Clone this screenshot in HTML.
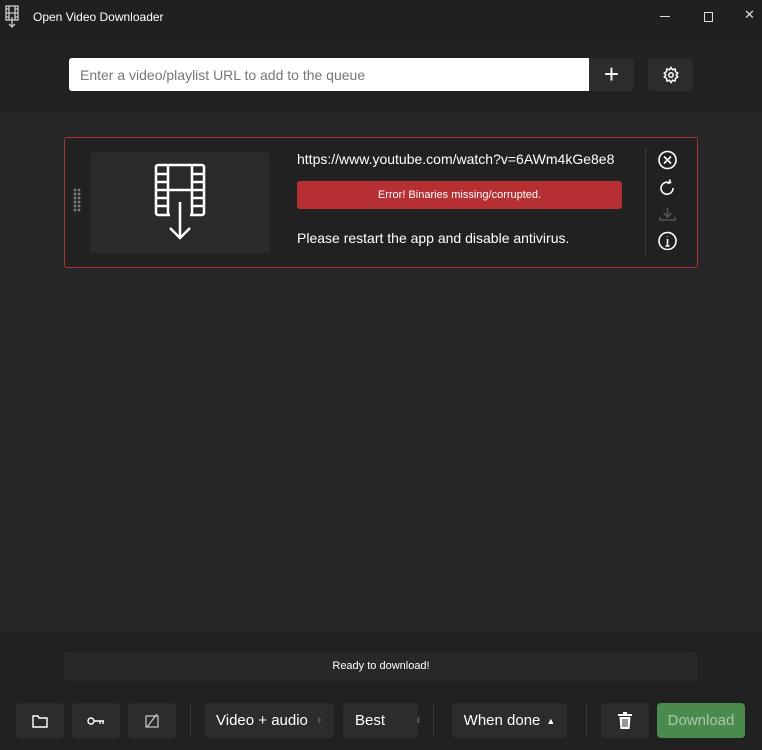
<!DOCTYPE html>
<html><head><style>
*{box-sizing:border-box;margin:0;padding:0}
body{width:762px;height:750px;background:#272727;font-family:"Liberation Sans",sans-serif;color:#fff;position:relative;overflow:hidden}
.abs{position:absolute}
.btn{position:absolute;background:#2c2c2c;border-radius:4px;display:flex;align-items:center;justify-content:center;font-size:15px}
</style></head><body>
<div class="abs" style="left:0;top:0;width:762px;height:36px;background:#202020"></div>
<svg class="abs" style="left:4px;top:5px" width="16" height="24" viewBox="0 0 16 24" fill="none" stroke="#ccc" stroke-width="1.3"><rect x="2" y="1" width="12" height="14"/><path d="M5 1v14M11 1v14M5 8h6M2 4h3M2 8h3M2 12h3M11 4h3M11 8h3M11 12h3M8 12v10M5 19l3 3 3-3"/></svg>
<div class="abs" style="left:33px;top:10px;font-size:12px;color:#fff">Open Video Downloader</div>
<div class="abs" style="left:660px;top:16px;width:10px;height:1px;background:#ddd"></div>
<div class="abs" style="left:704px;top:12px;width:9px;height:10px;border:1px solid #ddd"></div>
<div class="abs" style="left:744px;top:7px;font-size:13px;color:#ddd">✕</div>
<div class="abs" style="left:0;top:36px;width:762px;height:77px;background:#212121"></div>
<div class="abs" style="left:69px;top:58px;width:520px;height:33px;background:#fff;border-radius:3px 0 0 3px;color:#777;font-size:14px;padding:9px 11px">Enter a video/playlist URL to add to the queue</div>
<div class="btn" style="left:589px;top:58px;width:45px;height:33px;border-radius:0 3px 3px 0;font-size:26px;font-weight:300">+</div>
<div class="btn" style="left:648px;top:58px;width:45px;height:33px">
<svg width="18" height="18" viewBox="0 0 24 24" fill="none" stroke="#fff" stroke-width="2"><circle cx="12" cy="12" r="3"/><path d="M12 2l2 3 3.5-1 .5 3.5 3 2-2 2.5 2 2.5-3 2-.5 3.5-3.5-1-2 3-2-3-3.5 1-.5-3.5-3-2 2-2.5-2-2.5 3-2 .5-3.5 3.5 1z"/></svg></div>
<div class="abs" style="left:64px;top:137px;width:634px;height:131px;background:#212121;border:1px solid #a83236;border-radius:3px"></div>
<div class="abs" style="left:73px;top:188px;width:8px;height:24px;background:radial-gradient(circle,#777 1.3px,transparent 1.6px) 0 0/4px 4px"></div>
<div class="abs" style="left:90px;top:152px;width:180px;height:101px;background:#2a2a2a;border-radius:3px"></div>
<svg class="abs" style="left:150px;top:162px" width="60" height="80" viewBox="0 0 60 80" fill="none" stroke="#fff" stroke-width="2.5"><rect x="6" y="3" width="48" height="50" rx="2"/><path d="M18 3v50M42 3v50M18 28h24M6 12h12M6 20h12M6 28h12M6 36h12M6 44h12M42 12h12M42 20h12M42 28h12M42 36h12M42 44h12"/><rect x="20" y="45" width="20" height="12" fill="#2a2a2a" stroke="none"/><path d="M30 40v36M20 66l10 10 10-10"/></svg>
<div class="abs" style="left:297px;top:151px;width:325px;overflow:hidden;white-space:nowrap;font-size:14px">https://www.youtube.com/watch?v=6AWm4kGe8e8</div>
<div class="abs" style="left:297px;top:181px;width:325px;height:28px;background:#b52f33;border-radius:3px;font-size:11px;text-align:center;line-height:28px">Error! Binaries missing/corrupted.</div>
<div class="abs" style="left:297px;top:230px;font-size:14px">Please restart the app and disable antivirus.</div>
<div class="abs" style="left:645px;top:148px;width:1px;height:108px;background:#3a3a3a"></div>
<svg class="abs" style="left:657px;top:150px" width="21" height="100" viewBox="0 0 21 100" fill="none" stroke="#fff" stroke-width="1.6"><circle cx="10.5" cy="10" r="8.5"/><path d="M7 6.5l7 7M14 6.5l-7 7"/><path d="M16 38a6 6 0 1 1-3-5M12.5 29.5l1 3-3 1"/><path d="M10.5 58v9M6.5 63l4 4 4-4M3 67v3h15v-3" stroke="#555"/><circle cx="10.5" cy="91" r="8.5"/><path d="M10.5 89v7M10.5 86v.5M8.5 96h4"/></svg>
<div class="abs" style="left:0;top:631px;width:762px;height:119px;background:#212121"></div>
<div class="abs" style="left:64px;top:652px;width:634px;height:29px;background:#282828;border-radius:3px;font-size:11px;text-align:center;line-height:29px">Ready to download!</div>
<div class="btn" style="left:16px;top:703px;width:48px;height:35px"><svg width="16" height="14" viewBox="0 0 16 14" fill="none" stroke="#fff" stroke-width="1.4"><path d="M1 2h5l1 2h8v9H1z"/></svg></div>
<div class="btn" style="left:72px;top:703px;width:48px;height:35px"><svg width="18" height="10" viewBox="0 0 18 10" fill="none" stroke="#fff" stroke-width="1.4"><circle cx="4" cy="5" r="3"/><path d="M7 5h10M13 5v3M16 5v3"/></svg></div>
<div class="btn" style="left:128px;top:703px;width:48px;height:35px"><svg width="14" height="14" viewBox="0 0 14 14" fill="none" stroke="#ccc" stroke-width="1.2"><rect x="1" y="2" width="12" height="11"/><path d="M2 13L12 0"/></svg></div>
<div class="abs" style="left:190px;top:704px;width:1px;height:33px;background:#3a3a3a"></div>
<div class="btn" style="left:205px;top:703px;width:129px;height:35px;justify-content:flex-start;padding-left:11px">Video + audio<span style="color:#555;font-size:8px;margin-left:8px">⬍</span></div>
<div class="btn" style="left:343px;top:703px;width:75px;height:35px;justify-content:flex-start;padding-left:12px">Best<span style="color:#555;font-size:8px;margin-left:30px">⬍</span></div>
<div class="abs" style="left:433px;top:704px;width:1px;height:33px;background:#3a3a3a"></div>
<div class="btn" style="left:452px;top:703px;width:115px;height:35px">When done <span style="font-size:9px;margin-left:6px">▲</span></div>
<div class="abs" style="left:586px;top:704px;width:1px;height:33px;background:#3a3a3a"></div>
<div class="btn" style="left:601px;top:703px;width:48px;height:35px"><svg width="14" height="17" viewBox="0 0 14 17" fill="#fff"><rect x="0" y="2" width="14" height="2"/><rect x="5" y="0" width="4" height="2"/><path d="M1.5 5h11l-1 12h-9z"/><path d="M5 7v8M7 7v8M9 7v8" stroke="#2c2c2c"/></svg></div>
<div class="btn" style="left:657px;top:703px;width:88px;height:35px;background:#4a8a4c;color:#a8c9a9">Download</div>
</body></html>
